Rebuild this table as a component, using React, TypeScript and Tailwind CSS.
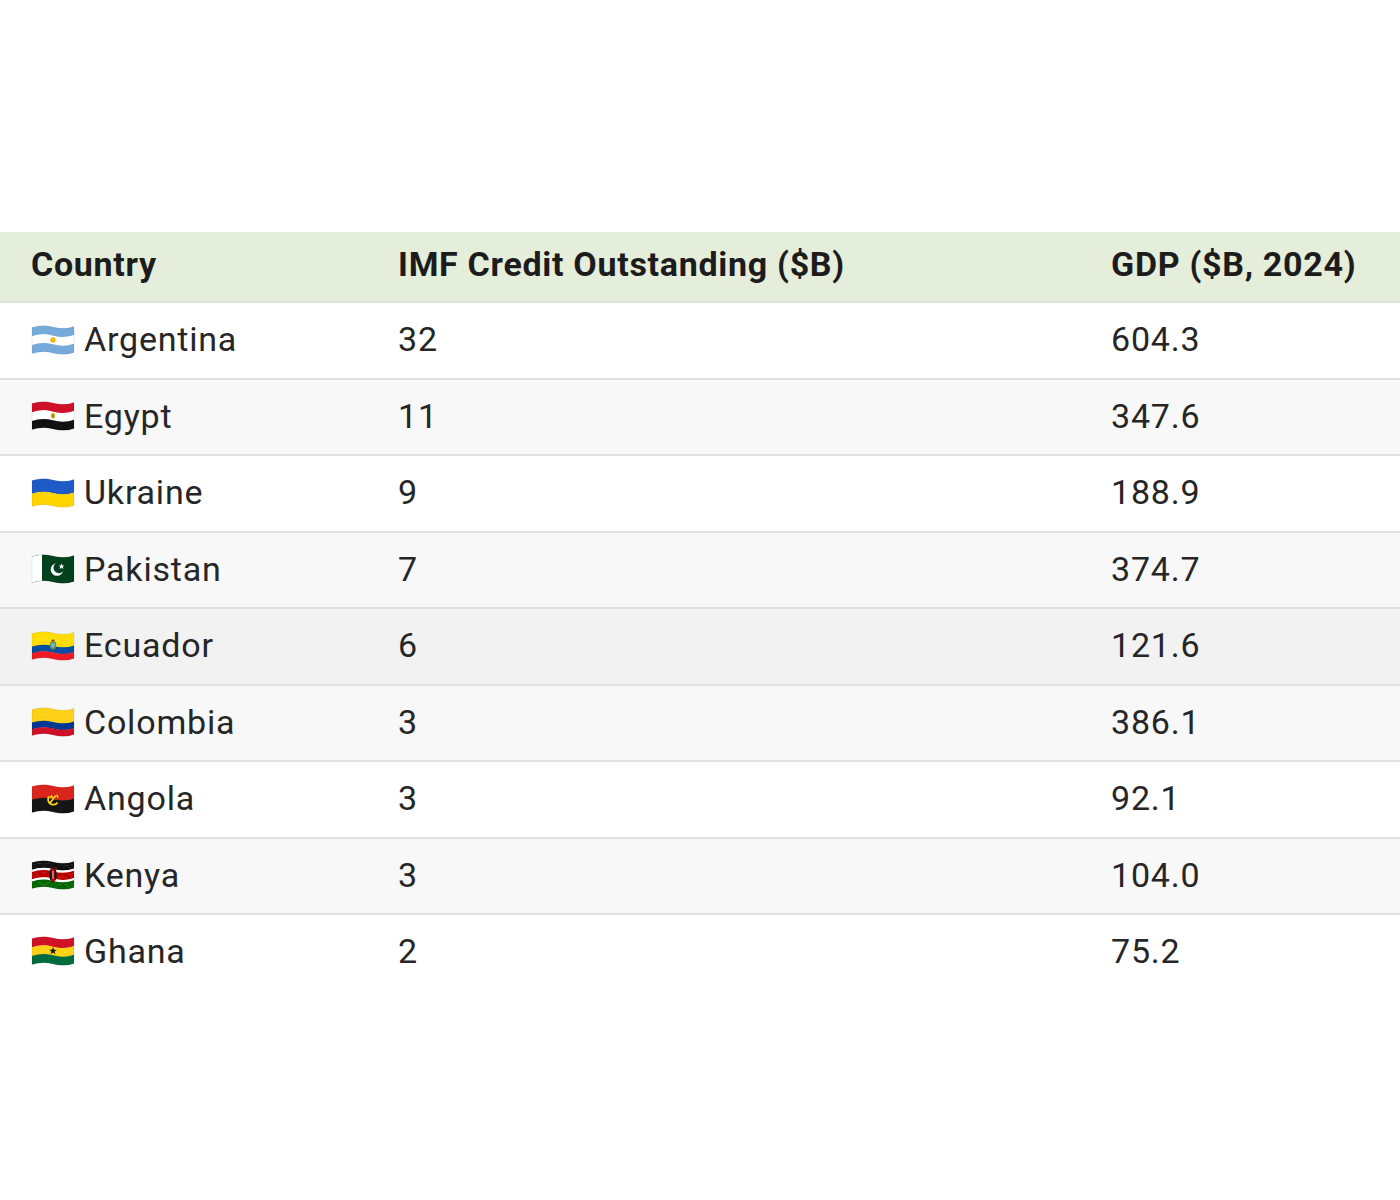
import React from "react";

const wave = (y0: number, y1: number) =>
  `M1 ${y0 + 1.2} Q11 ${y0 - 2.4} 22 ${y0 + 0.6} T43 ${y0} L43 ${y1} Q33 ${y1 + 3.6} 22 ${y1 + 0.6} T1 ${y1 + 1.2} Z`;

const TOP = 2.4;
const BOT = 28.4;
const H = BOT - TOP;

function Stripes({ colors }: { colors: string[] }) {
  const h = H / colors.length;
  return (
    <>
      {colors.map((c, i) => (
        <path key={i} d={wave(TOP + i * h, TOP + (i + 1) * h + (i < colors.length - 1 ? 0.3 : 0))} fill={c} />
      ))}
    </>
  );
}

function Flag({ code }: { code: string }) {
  const id = `clip-${code}`;
  let content: React.ReactNode = null;
  switch (code) {
    case "ar":
      content = (
        <>
          <Stripes colors={["#75AADB", "#FFFFFF", "#75AADB"]} />
          <circle cx="22" cy="16" r="2.7" fill="#F6B40E" />
        </>
      );
      break;
    case "eg":
      content = (
        <>
          <Stripes colors={["#CE1126", "#FFFFFF", "#111111"]} />
          <ellipse cx="22" cy="15.8" rx="2" ry="2.7" fill="#C09300" />
        </>
      );
      break;
    case "ua":
      content = <Stripes colors={["#1E5BC6", "#FFD500"]} />;
      break;
    case "pk":
      content = (
        <>
          <Stripes colors={["#01411C"]} />
          <g clipPath={`url(#${id})`}>
            <rect x="0" y="0" width="11" height="32" fill="#FFFFFF" />
          </g>
          <circle cx="26" cy="16.5" r="6.3" fill="#FFFFFF" />
          <circle cx="28" cy="14.7" r="5.5" fill="#01411C" />
          <polygon
            points="30.5,10.3 31.3,12.4 33.5,12.5 31.8,13.8 32.4,15.9 30.5,14.7 28.7,15.9 29.3,13.8 27.6,12.5 29.8,12.4"
            fill="#FFFFFF"
          />
        </>
      );
      break;
    case "ec":
      content = (
        <>
          <Stripes colors={["#FFDD00", "#FFDD00", "#034EA2", "#ED1C24"]} />
          <ellipse cx="22" cy="15.3" rx="3.2" ry="4.2" fill="#6F8F3A" />
          <ellipse cx="22" cy="15.3" rx="1.9" ry="2.7" fill="#6FB3D9" />
          <rect x="20.5" y="9.6" width="3" height="1.6" fill="#7A5A2B" />
        </>
      );
      break;
    case "co":
      content = <Stripes colors={["#FCD116", "#FCD116", "#003893", "#CE1126"]} />;
      break;
    case "ao":
      content = (
        <>
          <Stripes colors={["#D9261C", "#151515"]} />
          <path d="M18 13.5 A5 5 0 0 0 26.5 19.5" stroke="#F9D616" strokeWidth="1.8" fill="none" />
          <path d="M18.5 20.5 L25 12.5" stroke="#F9D616" strokeWidth="1.6" />
          <path d="M25 12.5 Q27.5 12 26.5 15" stroke="#F9D616" strokeWidth="1.2" fill="none" />
          <polygon points="20.5,11.5 21.1,13.1 22.7,13.2 21.5,14.2 21.9,15.7 20.5,14.8 19.1,15.7 19.5,14.2 18.3,13.2 19.9,13.1" fill="#F9D616" />
        </>
      );
      break;
    case "ke":
      content = (
        <>
          <Stripes colors={["#111111", "#FFFFFF", "#BB0000", "#FFFFFF", "#006600"].flatMap((c) => (c === "#FFFFFF" ? [c] : [c, c, c]))} />
          <ellipse cx="22" cy="15.8" rx="3.3" ry="7.4" fill="#BB0000" stroke="#111111" strokeWidth="0.4" />
          <ellipse cx="19.6" cy="15.8" rx="1" ry="5.2" fill="#111111" />
          <ellipse cx="24.4" cy="15.8" rx="1" ry="5.2" fill="#111111" />
          <rect x="21.6" y="11.8" width="0.8" height="8" fill="#FFFFFF" />
        </>
      );
      break;
    case "gh":
      content = (
        <>
          <Stripes colors={["#CE1126", "#FCD116", "#006B3F"]} />
          <polygon
            points="22,12 22.95,14.7 25.8,14.75 23.5,16.45 24.35,19.2 22,17.55 19.65,19.2 20.5,16.45 18.2,14.75 21.05,14.7"
            fill="#111111"
          />
        </>
      );
      break;
  }
  return (
    <svg width="44" height="32" viewBox="0 0 44 32" className="shrink-0">
      <defs>
        <clipPath id={id}>
          <path d={wave(TOP, BOT)} />
        </clipPath>
      </defs>
      {content}
      <path d={wave(TOP, BOT)} fill="none" stroke="rgba(0,0,0,0.12)" strokeWidth="0.6" />
    </svg>
  );
}

const rows = [
  { code: "ar", name: "Argentina", imf: "32", gdp: "604.3" },
  { code: "eg", name: "Egypt", imf: "11", gdp: "347.6" },
  { code: "ua", name: "Ukraine", imf: "9", gdp: "188.9" },
  { code: "pk", name: "Pakistan", imf: "7", gdp: "374.7" },
  { code: "ec", name: "Ecuador", imf: "6", gdp: "121.6" },
  { code: "co", name: "Colombia", imf: "3", gdp: "386.1" },
  { code: "ao", name: "Angola", imf: "3", gdp: "92.1" },
  { code: "ke", name: "Kenya", imf: "3", gdp: "104.0" },
  { code: "gh", name: "Ghana", imf: "2", gdp: "75.2" },
];

const rowBg = [
  "bg-white",
  "bg-[#f8f8f8]",
  "bg-white",
  "bg-[#f8f8f8]",
  "bg-[#f2f2f2]",
  "bg-[#f8f8f8]",
  "bg-white",
  "bg-[#f8f8f8]",
  "bg-white",
];

export default function App() {
  return (
    <div className="w-[1400px] h-[1200px] bg-white pt-[232px] font-['Roboto',sans-serif]">
      <div className="grid grid-cols-[367px_713px_320px] h-[71px] items-center pb-[5px] bg-[#e5eddb] border-b-2 border-[#dfe4d8] text-[34px] tracking-[0.7px] font-bold text-[#1c1c1c]">
        <div className="pl-[31px]">Country</div>
        <div className="pl-[31px]">IMF Credit Outstanding ($B)</div>
        <div className="pl-[31px]">GDP ($B, 2024)</div>
      </div>
      {rows.map((r, i) => (
        <div
          key={r.code}
          className={`grid grid-cols-[367px_713px_320px] items-center text-[34px] tracking-[0.8px] text-[#262626] ${rowBg[i]} ${
            i < rows.length - 1 ? "h-[76.5px] border-b-2 border-[#e0e0e0] pb-[1px]" : "h-[76px] pb-[4px]"
          }`}
        >
          <div className="pl-[31px] flex items-center gap-[9px]">
            <Flag code={r.code} />
            <span>{r.name}</span>
          </div>
          <div className="pl-[31px]">{r.imf}</div>
          <div className="pl-[31px]">{r.gdp}</div>
        </div>
      ))}
    </div>
  );
}
